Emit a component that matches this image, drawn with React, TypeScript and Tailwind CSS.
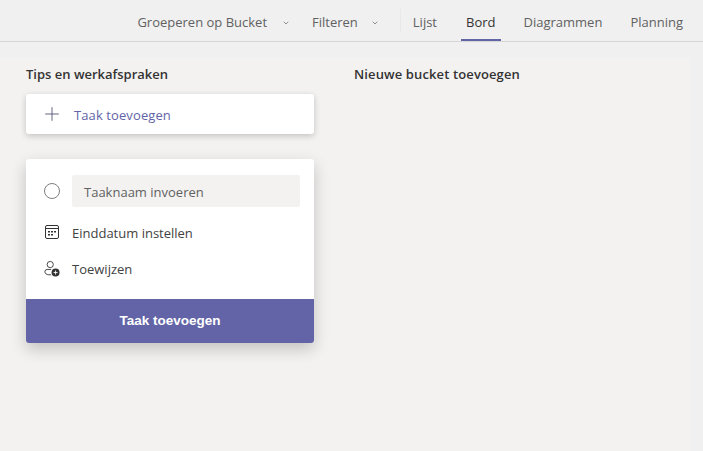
import { Plus, ChevronDown } from "lucide-react";

const font = "font-['Open_Sans','Noto_Sans',sans-serif]";

function CalendarIcon() {
  return (
    <svg width="16" height="16" viewBox="0 0 16 16" fill="none" stroke="#333" strokeWidth="1">
      <rect x="1.5" y="1.5" width="13" height="13" rx="1.5" />
      <path d="M1.5 4.5h13" />
      <g fill="#333" stroke="none">
        <rect x="4" y="7" width="2" height="1.5" />
        <rect x="7" y="7" width="2" height="1.5" />
        <rect x="10" y="7" width="2" height="1.5" />
        <rect x="4" y="10" width="2" height="1.5" />
        <rect x="7" y="10" width="2" height="1.5" />
      </g>
    </svg>
  );
}

function AssignIcon() {
  return (
    <svg width="18" height="18" viewBox="0 0 18 18" fill="none" stroke="#333" strokeWidth="1">
      <circle cx="7" cy="4" r="3.5" />
      <path d="M8 9.5H3.5A2.5 2.5 0 0 0 1 12c0 2 1.8 3.5 4.5 3.5H8" />
      <circle cx="13" cy="13" r="4.5" fill="#333" stroke="none" />
      <path d="M13 10.8v4.4M10.8 13h4.4" stroke="#fff" />
    </svg>
  );
}

function TabLink({ label, active }: { label: string; active?: boolean }) {
  return (
    <div className={`relative h-full flex items-center pt-[5px] text-[13px] ${active ? "text-[#333]" : "text-[#616161]"}`}>
      {label}
      {active && <div className="absolute -left-[5px] -right-[5px] bottom-0 h-[2px] bg-[#6264a7]" />}
    </div>
  );
}

export default function App() {
  return (
    <div className={`w-[703px] h-[451px] overflow-hidden flex flex-col bg-[#f0f0f0] ${font}`}>
      <header className="h-[42px] shrink-0 flex items-center justify-end pr-[20px] border-b border-[#d6d6d6] bg-[#f0f0f0]">
        <div className="flex items-center pt-[4px] text-[13px] text-[#616161]">
          <span>Groeperen op Bucket</span>
          <ChevronDown size={8} className="ml-[15px] mr-[22px]" />
          <span>Filteren</span>
          <ChevronDown size={8} className="ml-[13px] mr-[21px]" />
        </div>
        <div className="w-px h-[24px] bg-[#e8e8e8] mr-[12px]" />
        <div className="h-full flex items-center gap-[28px]">
          <div className="h-full mr-[1px]">
            <TabLink label="Lijst" />
          </div>
          <TabLink label="Bord" active />
          <TabLink label="Diagrammen" />
          <TabLink label="Planning" />
        </div>
      </header>
      <main className="flex-1 flex pt-[16px] pr-[13px]">
        <div className="flex-1 bg-[#f3f2f1] flex gap-[40px] pl-[26px] pt-[8px]">
          <section className="w-[288px]">
            <h2 className="text-[13px] font-semibold text-[#333] leading-[18px] -mt-[1px]">Tips en werkafspraken</h2>
            <button className="mt-[11px] w-full h-[40px] flex items-center pl-[15px] bg-white rounded-[3px] shadow-[0_2px_6px_rgba(0,0,0,0.2)] text-[13px] text-[#6264a7]">
              <Plus size={22} strokeWidth={1} className="text-[#55557a]" />
              <span className="ml-[11px] pt-[4px] tracking-[0.1px]">Taak toevoegen</span>
            </button>
            <div className="mt-[25px] bg-white rounded-[3px] overflow-hidden shadow-[0_6px_16px_rgba(0,0,0,0.2)]">
              <div className="pt-[16px] pl-[18px] pr-[14px] h-[140px]">
                <div className="flex items-center gap-[12px]">
                  <div className="w-[16px] h-[16px] rounded-full border border-[#808080]" />
                  <div className="flex-1 h-[32px] bg-[#f3f2f1] rounded-[2px] flex items-center pl-[12px] pt-[4px] text-[13px] text-[#616161]">
                    Taaknaam invoeren
                  </div>
                </div>
                <div className="flex items-center gap-[12px] mt-[16px] h-[20px] text-[13px] text-[#424242]">
                  <div className="w-[16px] flex justify-center -mt-[2px]"><CalendarIcon /></div>
                  <span className="pt-[1px]">Einddatum instellen</span>
                </div>
                <div className="flex items-center gap-[12px] mt-[16px] h-[20px] text-[13px] text-[#424242]">
                  <div className="w-[16px] flex justify-center"><AssignIcon /></div>
                  <span className="pt-[1px]">Toewijzen</span>
                </div>
              </div>
              <button className="w-full h-[44px] bg-[#6264a7] text-white text-[13.5px] font-bold font-['Liberation_Sans',sans-serif]">
                Taak toevoegen
              </button>
            </div>
          </section>
          <section>
            <h2 className="text-[13px] font-semibold text-[#333] leading-[18px] -mt-[1px] tracking-[0.12px]">Nieuwe bucket toevoegen</h2>
          </section>
        </div>
      </main>
    </div>
  );
}
